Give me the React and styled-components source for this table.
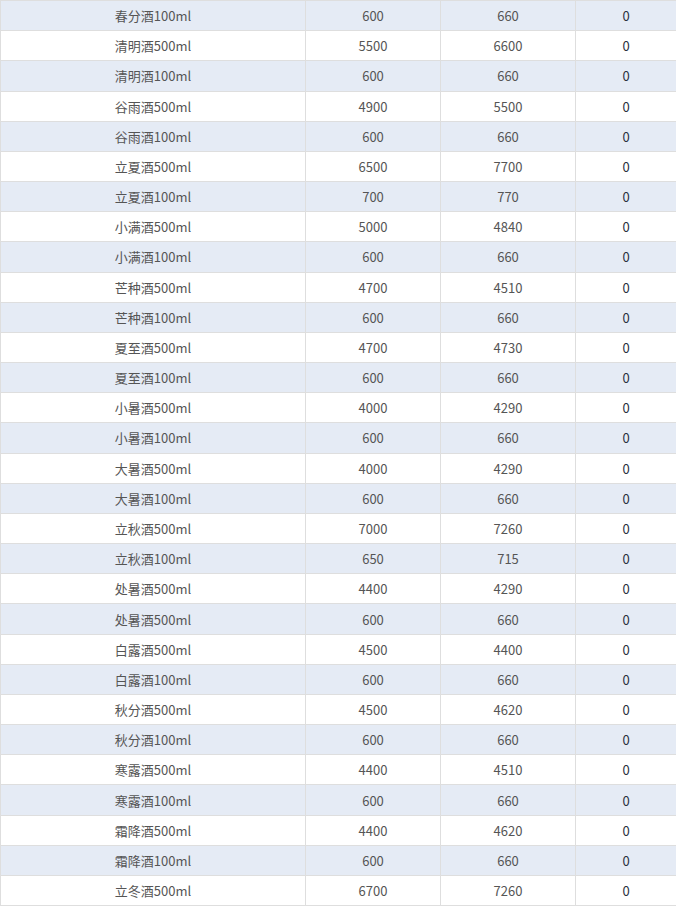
import React from 'react';
import styled, { createGlobalStyle } from 'styled-components';

const GlobalStyle = createGlobalStyle`
  html, body {
    margin: 0;
    padding: 0;
    background: #ffffff;
    overflow: hidden;
  }
  body {
    font-family: "Noto Sans CJK SC", "Noto Sans", sans-serif;
  }
`;

const rows = [
    ['春分酒100ml', 600, 660, 0],
    ['清明酒500ml', 5500, 6600, 0],
    ['清明酒100ml', 600, 660, 0],
    ['谷雨酒500ml', 4900, 5500, 0],
    ['谷雨酒100ml', 600, 660, 0],
    ['立夏酒500ml', 6500, 7700, 0],
    ['立夏酒100ml', 700, 770, 0],
    ['小满酒500ml', 5000, 4840, 0],
    ['小满酒100ml', 600, 660, 0],
    ['芒种酒500ml', 4700, 4510, 0],
    ['芒种酒100ml', 600, 660, 0],
    ['夏至酒500ml', 4700, 4730, 0],
    ['夏至酒100ml', 600, 660, 0],
    ['小暑酒500ml', 4000, 4290, 0],
    ['小暑酒100ml', 600, 660, 0],
    ['大暑酒500ml', 4000, 4290, 0],
    ['大暑酒100ml', 600, 660, 0],
    ['立秋酒500ml', 7000, 7260, 0],
    ['立秋酒100ml', 650, 715, 0],
    ['处暑酒500ml', 4400, 4290, 0],
    ['处暑酒500ml', 600, 660, 0],
    ['白露酒500ml', 4500, 4400, 0],
    ['白露酒100ml', 600, 660, 0],
    ['秋分酒500ml', 4500, 4620, 0],
    ['秋分酒100ml', 600, 660, 0],
    ['寒露酒500ml', 4400, 4510, 0],
    ['寒露酒100ml', 600, 660, 0],
    ['霜降酒500ml', 4400, 4620, 0],
    ['霜降酒100ml', 600, 660, 0],
    ['立冬酒500ml', 6700, 7260, 0],
];

function App() {
    return (
        <>
            <GlobalStyle />
            <Table>
                {rows.map((row, idx) => (
                    <Row key={idx} $striped={idx % 2 === 0}>
                        <Cell>{row[0]}</Cell>
                        <Cell>{row[1]}</Cell>
                        <Cell>{row[2]}</Cell>
                        <Cell $dark>{row[3]}</Cell>
                    </Row>
                ))}
            </Table>
        </>
    );
}

export default App;

const Table = styled.div`
  display: flex;
  flex-direction: column;
  width: 676px;
  border-top: 1px solid #dedede;
`;

const Row = styled.div`
  display: grid;
  grid-template-columns: 305px 135px 135px 101px;
  height: 30.18px;
  box-sizing: border-box;
  border-bottom: 1px solid #dedede;
  background-color: ${(p) => (p.$striped ? '#e5ebf5' : '#ffffff')};
`;

const Cell = styled.div`
  display: flex;
  align-items: center;
  justify-content: center;
  border-left: 1px solid #dedede;
  font-size: 13px;
  font-weight: 400;
  color: ${(p) => (p.$dark ? '#2a3140' : '#555555')};
  white-space: nowrap;
`;
